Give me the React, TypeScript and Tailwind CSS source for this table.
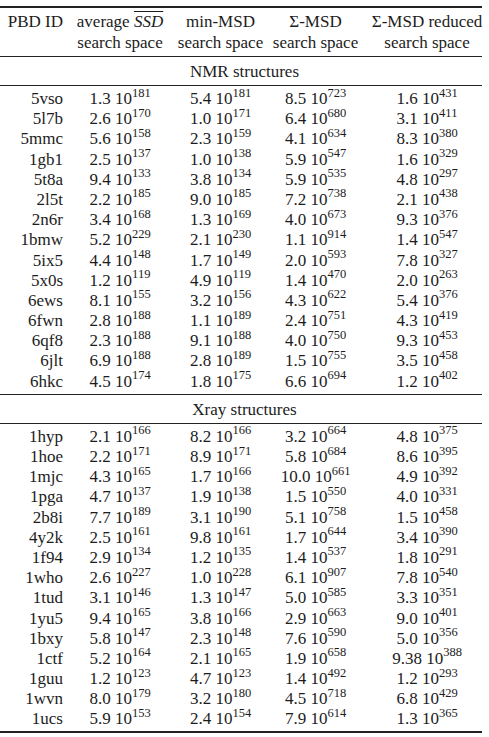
import React from "react";

type Row = [string, string, string, string, string, string, string, string, string];

const nmr: Row[] = [
  ["5vso", "1.3", "181", "5.4", "181", "8.5", "723", "1.6", "431"],
  ["5l7b", "2.6", "170", "1.0", "171", "6.4", "680", "3.1", "411"],
  ["5mmc", "5.6", "158", "2.3", "159", "4.1", "634", "8.3", "380"],
  ["1gb1", "2.5", "137", "1.0", "138", "5.9", "547", "1.6", "329"],
  ["5t8a", "9.4", "133", "3.8", "134", "5.9", "535", "4.8", "297"],
  ["2l5t", "2.2", "185", "9.0", "185", "7.2", "738", "2.1", "438"],
  ["2n6r", "3.4", "168", "1.3", "169", "4.0", "673", "9.3", "376"],
  ["1bmw", "5.2", "229", "2.1", "230", "1.1", "914", "1.4", "547"],
  ["5ix5", "4.4", "148", "1.7", "149", "2.0", "593", "7.8", "327"],
  ["5x0s", "1.2", "119", "4.9", "119", "1.4", "470", "2.0", "263"],
  ["6ews", "8.1", "155", "3.2", "156", "4.3", "622", "5.4", "376"],
  ["6fwn", "2.8", "188", "1.1", "189", "2.4", "751", "4.3", "419"],
  ["6qf8", "2.3", "188", "9.1", "188", "4.0", "750", "9.3", "453"],
  ["6jlt", "6.9", "188", "2.8", "189", "1.5", "755", "3.5", "458"],
  ["6hkc", "4.5", "174", "1.8", "175", "6.6", "694", "1.2", "402"],
];

const xray: Row[] = [
  ["1hyp", "2.1", "166", "8.2", "166", "3.2", "664", "4.8", "375"],
  ["1hoe", "2.2", "171", "8.9", "171", "5.8", "684", "8.6", "395"],
  ["1mjc", "4.3", "165", "1.7", "166", "10.0", "661", "4.9", "392"],
  ["1pga", "4.7", "137", "1.9", "138", "1.5", "550", "4.0", "331"],
  ["2b8i", "7.7", "189", "3.1", "190", "5.1", "758", "1.5", "458"],
  ["4y2k", "2.5", "161", "9.8", "161", "1.7", "644", "3.4", "390"],
  ["1f94", "2.9", "134", "1.2", "135", "1.4", "537", "1.8", "291"],
  ["1who", "2.6", "227", "1.0", "228", "6.1", "907", "7.8", "540"],
  ["1tud", "3.1", "146", "1.3", "147", "5.0", "585", "3.3", "351"],
  ["1yu5", "9.4", "165", "3.8", "166", "2.9", "663", "9.0", "401"],
  ["1bxy", "5.8", "147", "2.3", "148", "7.6", "590", "5.0", "356"],
  ["1ctf", "5.2", "164", "2.1", "165", "1.9", "658", "9.38", "388"],
  ["1guu", "1.2", "123", "4.7", "123", "1.4", "492", "1.2", "293"],
  ["1wvn", "8.0", "179", "3.2", "180", "4.5", "718", "6.8", "429"],
  ["1ucs", "5.9", "153", "2.4", "154", "7.9", "614", "1.3", "365"],
];

const grid = "grid grid-cols-[69px_102px_99px_91px_128px]";

function Num({ m, e }: { m: string; e: string }) {
  return (
    <span className="whitespace-nowrap">
      {m} 10<sup className="text-[12.5px] top-[-0.6em]">{e}</sup>
    </span>
  );
}

function Cell({ children, last }: { children: React.ReactNode; last?: boolean }) {
  return (
    <div className={"flex justify-center whitespace-nowrap" + (last ? " pl-[4px]" : "")}>
      {children}
    </div>
  );
}

function DataRow({ r }: { r: Row }) {
  return (
    <div className={grid + " h-[20.2px] leading-[20.2px]"}>
      <div className="flex justify-end pr-[6px]">{r[0]}</div>
      <Cell>
        <Num m={r[1]} e={r[2]} />
      </Cell>
      <Cell>
        <Num m={r[3]} e={r[4]} />
      </Cell>
      <Cell>
        <Num m={r[5]} e={r[6]} />
      </Cell>
      <Cell last>
        <Num m={r[7]} e={r[8]} />
      </Cell>
    </div>
  );
}

function Rule({ thick }: { thick?: boolean }) {
  return <div className={"w-[482px] bg-[#222] " + (thick ? "h-[2px]" : "h-[1px]")} />;
}

export default function App() {
  return (
    <div
      className="w-[489px] h-[737px] bg-white text-[#1c1c1c] text-[17px] overflow-hidden"
      style={{ fontFamily: '"Liberation Serif", "Times New Roman", serif' }}
    >
      <div className="h-[6px]" />
      <Rule thick />
      <div className={grid + " pt-[3px] pb-[3px] leading-[21px]"}>
        <div className="flex justify-end pr-[6px] whitespace-nowrap">PBD ID</div>
        <Cell>
          <div className="flex flex-col items-center">
            <span>
              average <span className="italic overline">SSD</span>
            </span>
            <span>search space</span>
          </div>
        </Cell>
        <Cell>
          <div className="flex flex-col items-center">
            <span>min-MSD</span>
            <span>search space</span>
          </div>
        </Cell>
        <Cell>
          <div className="flex flex-col items-center">
            <span>Σ-MSD</span>
            <span>search space</span>
          </div>
        </Cell>
        <Cell last>
          <div className="flex flex-col items-center">
            <span>Σ-MSD reduced</span>
            <span>search space</span>
          </div>
        </Cell>
      </div>
      <Rule />
      <div className="pt-[4px] pb-[3px] leading-[21px] flex justify-center">NMR structures</div>
      <Rule />
      <div className="pt-[3px] pb-[2px]">
        {nmr.map((r) => (
          <DataRow key={r[0]} r={r} />
        ))}
      </div>
      <Rule />
      <div className="pt-[4px] pb-[3px] leading-[21px] flex justify-center">Xray structures</div>
      <Rule />
      <div className="pt-[3px] pb-[1px]">
        {xray.map((r) => (
          <DataRow key={r[0]} r={r} />
        ))}
      </div>
      <Rule thick />
    </div>
  );
}
